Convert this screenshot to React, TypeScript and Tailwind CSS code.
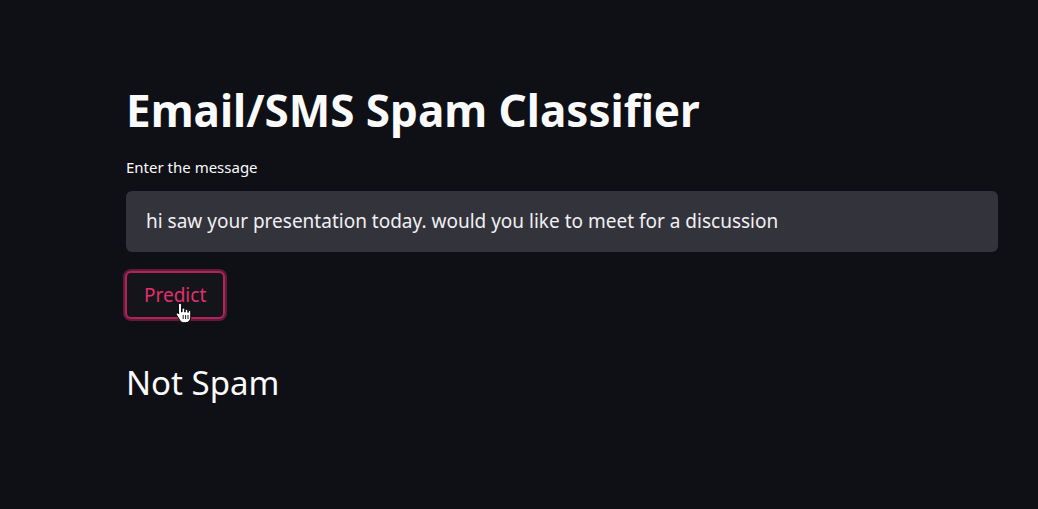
import React from "react";

export default function App() {
  return (
    <div className="w-[1038px] h-[509px] bg-[#0f0f16] text-[#fafafa] overflow-hidden" style={{ fontFamily: '"Noto Sans", "Open Sans", sans-serif' }}>
      <div className="pl-[126px] pr-[40px] pt-[82px]">
        <h1 className="text-[44px] font-bold leading-[56px] text-[#fafafa]">Email/SMS Spam Classifier</h1>
        <div className="mt-[19px] text-[15px] leading-[20px] text-[#fafafa]">Enter the message</div>
        <div className="mt-[14px] w-[872px] h-[61px] rounded-[6px] bg-[#33333c] flex items-center pl-[20px] text-[19px] text-[#f0f0f2]">
          hi saw your presentation today. would you like to meet for a discussion
        </div>
        <div className="relative mt-[19px] w-fit -ml-[1px]">
          <button className="h-[48px] px-[17px] rounded-[6px] border-2 border-[#b0245a] bg-[#14141b] text-[19px] text-[#e0306c] shadow-[0_0_0_2px_rgba(200,40,100,0.45)]">
            Predict
          </button>
          <svg className="absolute left-[50px] top-[31px]" width="18" height="22" viewBox="0 0 18 22">
            <path d="M5 1.5c1 0 1.6.7 1.6 1.6V10l.4-.1V7.6c0-.9.6-1.5 1.4-1.5s1.4.6 1.4 1.5v2.5h.3V8.8c0-.9.6-1.4 1.4-1.4s1.4.6 1.4 1.4v1.6h.3v-.6c0-.8.6-1.3 1.3-1.3s1.3.6 1.3 1.3v5.2c0 3.2-2 5.7-5.2 5.7H8.8c-1.8 0-3-1-4-2.4L1.6 13.1c-.5-.7-.3-1.6.4-2 .6-.4 1.4-.2 1.9.4L3.4 12V3.1C3.4 2.2 4 1.5 5 1.5z" fill="#ffffff" stroke="#000" strokeWidth="1" />
            <path d="M8.2 13v4M10.6 13v4M13 13v4" stroke="#000" strokeWidth="0.9" />
          </svg>
        </div>
        <div className="mt-[43px] text-[33px] leading-[42px] text-[#fafafa]">Not Spam</div>
      </div>
    </div>
  );
}
